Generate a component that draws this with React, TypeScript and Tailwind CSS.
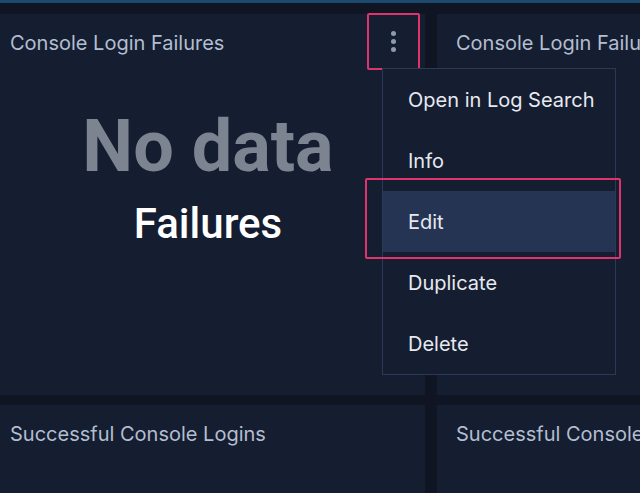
import React from "react";

const titleFont = { fontFamily: "Inter, 'Noto Sans', sans-serif" } as React.CSSProperties;

function Panel({ title, children }: { title: string; children?: React.ReactNode }) {
  return (
    <div className="bg-[#151d30] h-full overflow-hidden flex flex-col">
      <div className="h-[58px] pl-[19px] flex items-center text-[20px] text-[#b2bed1] whitespace-nowrap" style={titleFont}>
        {title}
      </div>
      {children}
    </div>
  );
}

export default function App() {
  const items = ["Open in Log Search", "Info", "Edit", "Duplicate", "Delete"];
  return (
    <div className="relative w-[640px] h-[493px] overflow-hidden bg-[#0f1522]">
      <div className="h-[3px] bg-[#1b4a6e]" />
      <div className="ml-[-9px] mt-[11px] grid grid-cols-[434px_434px] grid-rows-[381px_120px] gap-x-[12px] gap-y-[10px]">
        <Panel title="Console Login Failures">
          <div className="flex flex-col items-center" style={{ fontFamily: "Roboto, sans-serif" }}>
            <div className="mt-[39px] text-[72px] leading-none font-bold text-[#7c8491]">No data</div>
            <div className="mt-[20px] text-[42px] leading-none font-medium text-white">Failures</div>
          </div>
        </Panel>
        <Panel title="Console Login Failures" />
        <Panel title="Successful Console Logins" />
        <Panel title="Successful Console Logins" />
      </div>

      {/* kebab button with highlight */}
      <div className="absolute left-[367px] top-[13px] w-[53px] h-[57px] border-2 border-[#e0336c] rounded-[2px] flex flex-col items-center justify-center gap-[3px]">
        <span className="w-[5px] h-[5px] rounded-full bg-[#8d9bb0]" />
        <span className="w-[5px] h-[5px] rounded-full bg-[#8d9bb0]" />
        <span className="w-[5px] h-[5px] rounded-full bg-[#8d9bb0]" />
      </div>

      {/* dropdown menu */}
      <div className="absolute left-[382px] top-[68px] w-[234px] border border-[#2a3958] bg-[#151d30] flex flex-col" style={titleFont}>
        {items.map((it) => (
          <div
            key={it}
            className={
              "h-[61px] pl-[25px] flex items-center text-[20px] text-[#e6e9ef] whitespace-nowrap " +
              (it === "Edit" ? "bg-[#253452]" : "")
            }
          >
            {it}
          </div>
        ))}
      </div>

      {/* highlight around Edit */}
      <div className="absolute left-[365px] top-[178px] w-[256px] h-[81px] border-2 border-[#e0336c] rounded-[2px]" />
    </div>
  );
}
